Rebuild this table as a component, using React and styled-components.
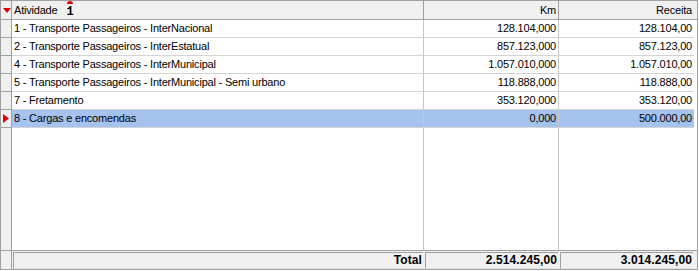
import React from "react";
import styled, { createGlobalStyle } from "styled-components";

const Global = createGlobalStyle`
  html, body { margin: 0; padding: 0; background: #ffffff; }
  body { font-family: "Liberation Sans", Arial, sans-serif; font-size: 11px; color: #000; }
`;

const COLS = "11px 412px 135px 135px";

const Frame = styled.div`
  width: 698px;
  height: 270px;
  box-sizing: border-box;
  border: 1px solid #a0a0a0;
  display: flex;
  flex-direction: column;
  background: #fff;
  overflow: hidden;
  letter-spacing: -0.2px;
`;

const Header = styled.div`
  display: grid;
  grid-template-columns: ${COLS};
  height: 19px;
  box-sizing: border-box;
  border-bottom: 1px solid #a0a0a0;
  background: #f0f0f0;
`;

const HeadCell = styled.div`
  box-sizing: border-box;
  border-right: ${(p) => (p.$last ? "none" : "1px solid #a0a0a0")};
  display: flex;
  align-items: center;
  justify-content: ${(p) => (p.$right ? "flex-end" : "flex-start")};
  padding: ${(p) => (p.$right ? "0 2px 0 0" : "0 0 0 2px")};
  line-height: 18px;
  white-space: nowrap;
`;

const Indicator = styled.div`
  box-sizing: border-box;
  background: #f0f0f0;
  border-right: 1px solid #a0a0a0;
  border-bottom: ${(p) => (p.$noBottom ? "none" : "1px solid #a0a0a0")};
  display: flex;
  align-items: center;
  justify-content: flex-start;
  padding-left: 2px;
`;

const SortMark = styled.span`
  position: relative;
  display: inline-block;
  margin-left: 9px;
  font-family: "Liberation Mono", monospace;
  font-weight: bold;
  font-size: 12px;
  line-height: 12px;
  letter-spacing: 0;
  margin-top: 3px;
  &::before {
    content: "";
    position: absolute;
    left: 1px;
    top: -5px;
    width: 6px;
    height: 3px;
    background: #e00000;
    border-radius: 3px 3px 0 0;
  }
`;

const Body = styled.div`
  flex: 1;
  display: flex;
  flex-direction: column;
  border-bottom: 1px solid #a0a0a0;
`;

const Row = styled.div`
  display: grid;
  grid-template-columns: ${COLS};
  flex: ${(p) => (p.$fill ? 1 : "none")};
  height: ${(p) => (p.$fill ? "auto" : "18px")};
`;

const Cell = styled.div`
  box-sizing: border-box;
  border-right: ${(p) => (p.$last ? "none" : "1px solid #c8c8c8")};
  border-bottom: ${(p) => (p.$fill ? "none" : "1px solid #d4d4d4")};
  background: ${(p) => (p.$selected ? "#a6c2ee" : "#ffffff")};
  text-align: ${(p) => (p.$right ? "right" : "left")};
  padding: ${(p) => (p.$right ? "0 2px 0 0" : "0 0 0 2px")};
  line-height: 17px;
  white-space: nowrap;
  overflow: hidden;
`;

const Footer = styled.div`
  display: grid;
  grid-template-columns: ${COLS};
  height: 18px;
  background: #f0f0f0;
`;

const FootCell = styled.div`
  box-sizing: border-box;
  margin: 1px 1px 0 1px;
  border-left: 1px solid #a0a0a0;
  border-top: 1px solid #a0a0a0;
  border-bottom: 1px solid #e3e3e3;
  text-align: right;
  padding-right: 1px;
  font-weight: bold;
  font-size: 12px;
  letter-spacing: 0.1px;
  line-height: 15px;
  white-space: nowrap;
`;

const RowPointer = () => (
  <svg width="6" height="9" viewBox="0 0 6 9">
    <polygon points="0,0 6,4.5 0,9" fill="#e00000" />
  </svg>
);

const DownPointer = () => (
  <svg width="8" height="5" viewBox="0 0 8 5">
    <polygon points="0,0 8,0 4,5" fill="#e00000" />
  </svg>
);

const rows = [
  ["1 - Transporte Passageiros - InterNacional", "128.104,000", "128.104,00"],
  ["2 - Transporte Passageiros - InterEstatual", "857.123,000", "857.123,00"],
  ["4 - Transporte Passageiros - InterMunicipal", "1.057.010,000", "1.057.010,00"],
  ["5 - Transporte Passageiros - InterMunicipal - Semi urbano", "118.888,000", "118.888,00"],
  ["7 - Fretamento", "353.120,000", "353.120,00"],
  ["8 - Cargas e encomendas", "0,000", "500.000,00"],
];

export default function App() {
  return (
    <>
      <Global />
      <Frame>
        <Header>
          <HeadCell>
            <DownPointer />
          </HeadCell>
          <HeadCell>
            Atividade
            <SortMark>1</SortMark>
          </HeadCell>
          <HeadCell $right>Km</HeadCell>
          <HeadCell $right $last>Receita</HeadCell>
        </Header>
        <Body>
          {rows.map((r, i) => {
            const sel = i === rows.length - 1;
            return (
              <Row key={i}>
                <Indicator>{sel && <RowPointer />}</Indicator>
                <Cell $selected={sel}>{r[0]}</Cell>
                <Cell $selected={sel} $right>{r[1]}</Cell>
                <Cell $selected={sel} $right $last>{r[2]}</Cell>
              </Row>
            );
          })}
          <Row $fill>
            <Indicator $noBottom />
            <Cell $fill />
            <Cell $fill />
            <Cell $fill $last />
          </Row>
        </Body>
        <Footer>
          <Indicator $noBottom />
          <FootCell>Total</FootCell>
          <FootCell>2.514.245,00</FootCell>
          <FootCell>3.014.245,00</FootCell>
        </Footer>
      </Frame>
    </>
  );
}
